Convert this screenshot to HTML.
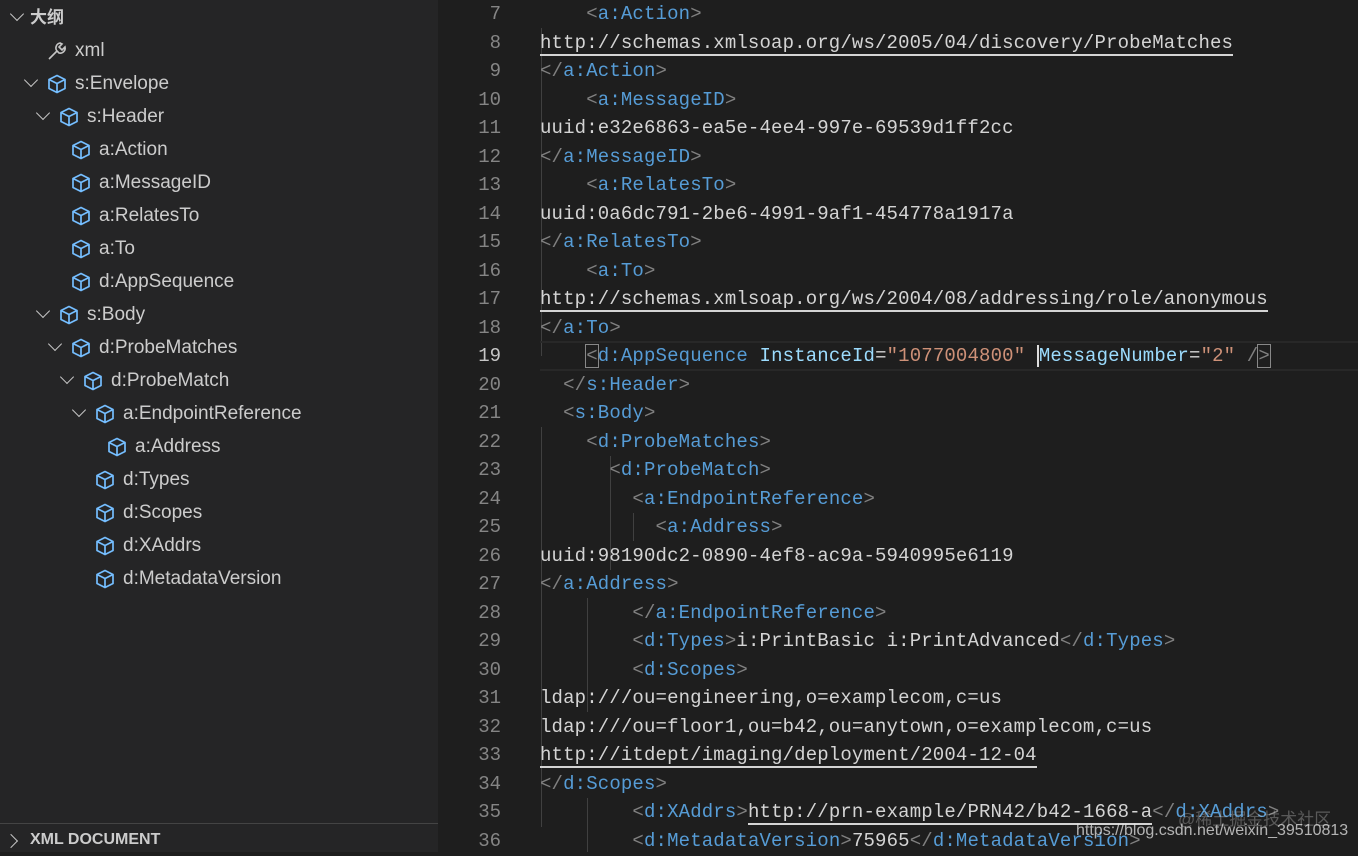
<!DOCTYPE html>
<html><head><meta charset="utf-8"><style>
*{margin:0;padding:0;box-sizing:border-box}
body{width:1358px;height:852px;overflow:hidden;background:#1e1e1e;position:relative;font-family:"Liberation Sans","Noto Sans CJK SC",sans-serif}
#side{position:absolute;left:0;top:0;width:438px;height:852px;background:#252526}
#side .r{position:absolute;height:33px;line-height:33px;font-size:19px;color:#cccccc;white-space:nowrap}
.chev{position:absolute;width:10px;height:10px;border-right:1.6px solid #c5c5c5;border-bottom:1.6px solid #c5c5c5;transform:rotate(45deg)}
.ic{position:absolute;top:6px}
#ed{position:absolute;left:438px;top:0;right:0;bottom:0;font-family:"Liberation Mono",monospace;font-size:19px}
.l{position:absolute;left:0;height:28.5px;line-height:28.5px;white-space:pre;width:920px}
.n{position:absolute;left:0;width:63px;text-align:right;color:#858585}
.c{position:absolute;left:102px;color:#d4d4d4;letter-spacing:0.15px}
.b{color:#808080}.t{color:#569cd6}.a{color:#9cdcfe}.s{color:#ce9178}
.u{border-bottom:2px solid #d4d4d4}
.g{position:absolute;width:1px;background:#404040}
</style></head><body>
<div id="side">
<div class="r" style="top:1px;left:10px"><span class="chev" style="left:2px;top:8px"></span><b style="position:absolute;left:20px;color:#ccc;font-size:17px">大纲</b></div>
<div class="r" style="top:34px;left:46px"><svg class="ic" width="22" height="22" viewBox="0 0 22 22" fill="none" stroke="#c5c5c5" stroke-width="1.6"><path d="M3 19l8-8M14 3a5 5 0 0 0-3 8l2 2a5 5 0 0 0 6-6l-3 3-3-3 3-3z"/></svg><span style="position:absolute;left:29px">xml</span></div>
</div>
<div id="ed">
<div class="g" style="left:103px;top:28px;height:328px"></div>
<div class="g" style="left:103px;top:427px;height:400px"></div>
<div class="g" style="left:149px;top:598px;height:114px"></div>
<div class="g" style="left:172px;top:456px;height:114px"></div>
<div class="g" style="left:195px;top:513px;height:28px"></div>
<div class="g" style="left:149px;top:798px;height:54px"></div>
<div style="position:absolute;left:102px;right:0;top:341px;height:30px;border-top:2px solid #282828;border-bottom:2px solid #282828"></div>
</div>
<script>
var S=document.getElementById('side');
var items=[
[0,'s:Envelope',1],[1,'s:Header',1],[2,'a:Action',0],[2,'a:MessageID',0],[2,'a:RelatesTo',0],[2,'a:To',0],[2,'d:AppSequence',0],
[1,'s:Body',1],[2,'d:ProbeMatches',1],[3,'d:ProbeMatch',1],[4,'a:EndpointReference',1],[5,'a:Address',0],
[4,'d:Types',0],[4,'d:Scopes',0],[4,'d:XAddrs',0],[4,'d:MetadataVersion',0]];
var cube='<path d="M11 2.5l8 4v9l-8 4-8-4v-9z M3 6.5l8 4 8-4 M11 10.5v9"/>';
items.forEach(function(it,i){
 var x=46+it[0]*12, y=67+i*33;
 var h='<div class="r" style="top:'+y+'px;left:'+x+'px">';
 if(it[2]) h+='<span class="chev" style="left:-20px;top:8px"></span>';
 h+='<svg class="ic" width="22" height="22" viewBox="0 0 22 22" fill="none" stroke="#75beff" stroke-width="1.7" stroke-linejoin="round">'+cube+'</svg><span style="position:absolute;left:29px">'+it[1]+'</span></div>';
 S.insertAdjacentHTML('beforeend',h);
});
S.insertAdjacentHTML('beforeend','<div style="position:absolute;left:0;top:823px;width:438px;height:1px;background:#444"></div><div class="r" style="top:824px;left:10px;height:28px;line-height:32px"><span class="chev" style="left:-4px;top:12px;transform:rotate(-45deg)"></span><b style="position:absolute;left:20px;font-size:16px;color:#ccc">XML DOCUMENT</b></div>');
function T(n){return '<span class="b">&lt;</span><span class="t">'+n+'</span><span class="b">&gt;</span>'}
function C(n){return '<span class="b">&lt;/</span><span class="t">'+n+'</span><span class="b">&gt;</span>'}
function U(s){return '<span class="u">'+s+'</span>'}
function sp(k){return ' '.repeat(k)}
var L=[
[7,sp(4)+T('a:Action')],
[8,U('http://schemas.xmlsoap.org/ws/2005/04/discovery/ProbeMatches')],
[9,C('a:Action')],
[10,sp(4)+T('a:MessageID')],
[11,'uuid:e32e6863-ea5e-4ee4-997e-69539d1ff2cc'],
[12,C('a:MessageID')],
[13,sp(4)+T('a:RelatesTo')],
[14,'uuid:0a6dc791-2be6-4991-9af1-454778a1917a'],
[15,C('a:RelatesTo')],
[16,sp(4)+T('a:To')],
[17,U('http://schemas.xmlsoap.org/ws/2004/08/addressing/role/anonymous')],
[18,C('a:To')],
[19,sp(4)+'<span class="b" style="outline:1px solid #888">&lt;</span><span class="t">d:AppSequence</span> <span class="a">InstanceId</span>=<span class="s">"1077004800"</span> <span class="a" style="border-left:2px solid #ddd">MessageNumber</span>=<span class="s">"2"</span> <span class="b">/</span><span class="b" style="outline:1px solid #888">&gt;</span>'],
[20,sp(2)+C('s:Header')],
[21,sp(2)+T('s:Body')],
[22,sp(4)+T('d:ProbeMatches')],
[23,sp(6)+T('d:ProbeMatch')],
[24,sp(8)+T('a:EndpointReference')],
[25,sp(10)+T('a:Address')],
[26,'uuid:98190dc2-0890-4ef8-ac9a-5940995e6119'],
[27,C('a:Address')],
[28,sp(8)+C('a:EndpointReference')],
[29,sp(8)+T('d:Types')+'i:PrintBasic i:PrintAdvanced'+C('d:Types')],
[30,sp(8)+T('d:Scopes')],
[31,'ldap:///ou=engineering,o=examplecom,c=us'],
[32,'ldap:///ou=floor1,ou=b42,ou=anytown,o=examplecom,c=us'],
[33,U('http://itdept/imaging/deployment/2004-12-04')],
[34,C('d:Scopes')],
[35,sp(8)+T('d:XAddrs')+U('http://prn-example/PRN42/b42-1668-a')+C('d:XAddrs')],
[36,sp(8)+T('d:MetadataVersion')+'75965'+C('d:MetadataVersion')]
];
var E=document.getElementById('ed');
L.forEach(function(l,i){
 var y=i*28.5;
 E.insertAdjacentHTML('beforeend','<div class="l" style="top:'+y+'px"><span class="n" style="'+(l[0]==19?'color:#c6c6c6':'')+'">'+l[0]+'</span><span class="c">'+l[1]+'</span></div>');
});
</script>
<div style="position:absolute;left:1178px;top:805px;font-size:17px;color:rgba(200,200,200,0.35);font-family:'Liberation Sans','Noto Sans CJK SC',sans-serif">@稀土掘金技术社区</div>
<div style="position:absolute;left:1076px;top:822px;font-size:16px;color:rgba(230,230,230,0.75);font-family:'Liberation Sans',sans-serif">https://blog.csdn.net/weixin_39510813</div>
</body></html>
